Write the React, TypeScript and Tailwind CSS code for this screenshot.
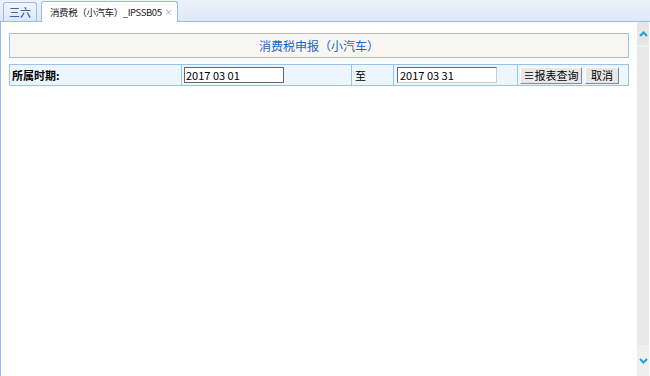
import React from "react";

const font = { fontFamily: '"SimSun", "Noto Sans CJK SC", "DejaVu Sans", sans-serif' };

export default function App() {
    return (
        <div className="w-[650px] h-[376px] bg-white flex flex-col overflow-hidden text-[12px] text-black" style={font}>
            {/* TABS */}
            <div className="h-[22px] flex items-end gap-[4px] pl-[3px] bg-gradient-to-b from-[#eef3fb] to-[#dde8f8] border-b border-[#99bbe8] shrink-0">
                <div className="h-[19px] w-[34px] flex items-center justify-center border border-b-0 border-[#99bbe8] rounded-t-[3px] bg-gradient-to-b from-[#f2f6fc] to-[#dbe6f6] text-[#15428b] text-[11px]">
                    三六
                </div>
                <div className="h-[21px] -mb-px pl-[8px] pr-[5px] flex items-center gap-[3px] border border-b-0 border-[#99bbe8] rounded-t-[3px] bg-white text-[#222] text-[9.5px] tracking-[-0.4px] whitespace-nowrap">
                    <span>消费税（小汽车）_IPSSB05</span>
                    <span className="text-[8px] text-[#8899bb]">×</span>
                </div>
            </div>

            {/* BODY */}
            <div className="flex-1 flex border-l border-[#99bbe8]">
                <div className="flex-1 pl-[8px] pr-[8px] pt-[11px]">
                    <div className="h-[25px] border border-[#99c3e8] bg-[#f9f5f1] flex items-center justify-center text-[#1b63c8]">
                        消费税申报（小汽车）
                    </div>
                    <div className="mt-[6px] h-[22px] border border-[#99c3e8] bg-[#eef6fd] flex">
                        <div className="w-[172px] flex items-center pl-[2px] font-bold text-[11px] border-r border-[#99c3e8]">所属时期:</div>
                        <div className="w-[170px] flex items-center pl-[2px] border-r border-[#99c3e8]">
                            <div className="w-[100px] h-[16px] bg-white border border-[#666] flex items-center pl-[1px] text-[11px]">2017 03 01</div>
                        </div>
                        <div className="w-[42px] flex items-center pl-[3px] text-[11px] border-r border-[#99c3e8]">至</div>
                        <div className="w-[124px] flex items-center pl-[3px] border-r border-[#99c3e8]">
                            <div className="w-[100px] h-[16px] bg-white border border-[#666] border-r-[#ccc] border-b-[#ccc] flex items-center pl-[2px] text-[11px]">2017 03 31</div>
                        </div>
                        <div className="flex-1 flex items-center pl-[2px] gap-[3px]">
                            <button className="w-[62px] h-[17px] bg-[#e8e8e8] border border-t-white border-l-white border-r-[#888] border-b-[#888] flex items-center justify-center text-[11px]">≡报表查询</button>
                            <button className="w-[34px] h-[17px] bg-[#e8e8e8] border border-t-white border-l-white border-r-[#888] border-b-[#888] flex items-center justify-center text-[11px]">取消</button>
                        </div>
                    </div>
                </div>

                {/* SCROLLBAR */}
                <div className="w-[12px] mr-[1px] flex flex-col bg-[#efefef]">
                    <div className="h-[23px] bg-[#e6e6e6] flex items-center justify-center">
                        <svg width="9" height="6" viewBox="0 0 9 6"><path d="M1 5 L4.5 1.5 L8 5" stroke="#1ba1e2" strokeWidth="2" fill="none" /></svg>
                    </div>
                    <div className="h-[298px] mt-[2px] bg-[#e8e8e8]" />
                    <div className="flex-1 flex items-center justify-center">
                        <svg width="9" height="6" viewBox="0 0 9 6"><path d="M1 1 L4.5 4.5 L8 1" stroke="#1ba1e2" strokeWidth="2" fill="none" /></svg>
                    </div>
                </div>
            </div>
        </div>
    );
}
